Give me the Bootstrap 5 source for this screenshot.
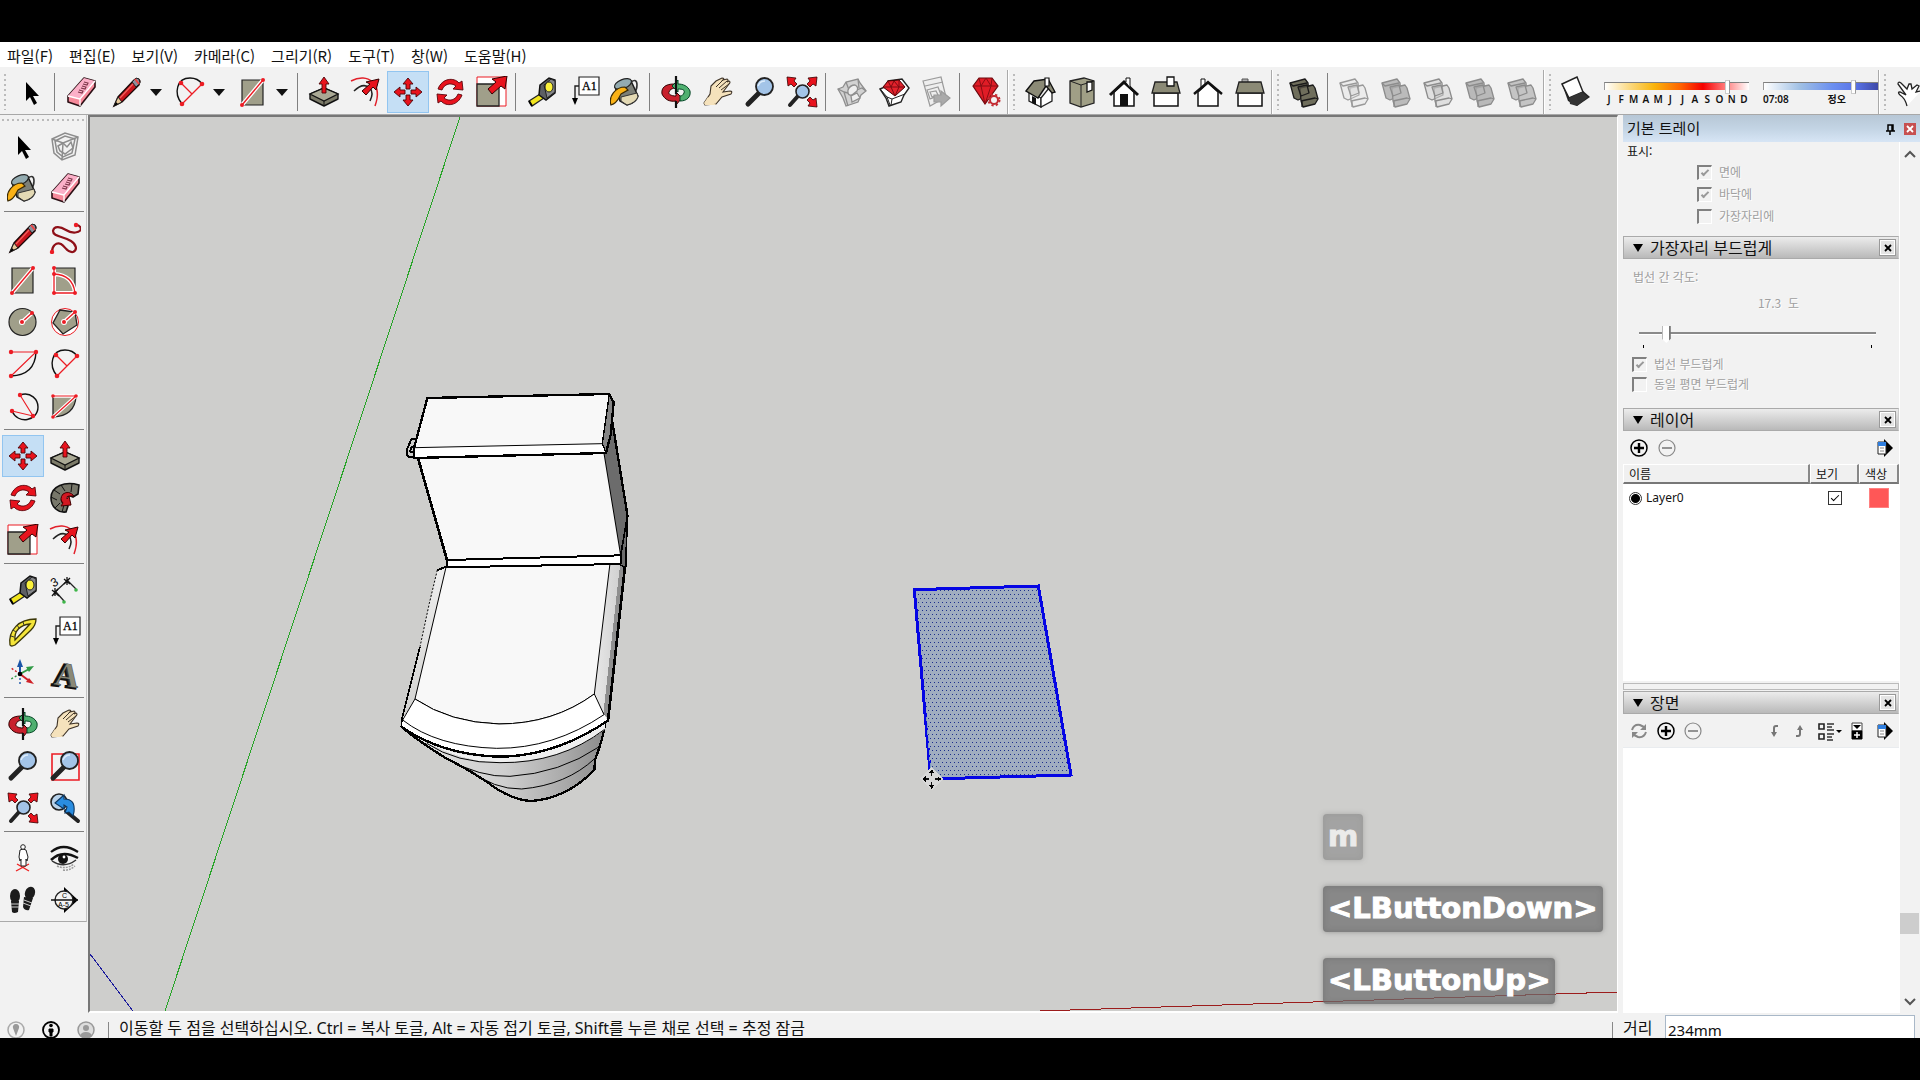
<!DOCTYPE html>
<html lang="ko">
<head>
<meta charset="utf-8">
<meta name="viewport" content="width=device-width, initial-scale=1">
<title>SketchUp</title>
<link href="https://cdn.jsdelivr.net/npm/bootstrap@5.3.0/dist/css/bootstrap.min.css" rel="stylesheet">
<style>
body{height:100vh;background:#000;padding:42px 0;color:#111;font:15px/20px "Noto Sans","Noto Sans CJK KR",sans-serif;overflow:hidden}
.kr{font-family:"Noto Sans CJK KR",sans-serif}
.app{background:#f2f2f2;min-height:0;overflow:hidden}
.menu-strip{background:#fff;height:26px;gap:16px;padding:2px 0 0 7px;border-bottom:1px solid #f2f2f2;font-family:"Noto Sans CJK KR",sans-serif}
.menu-strip a{color:#111;text-decoration:none}
.tool-strip{height:47px;padding-top:2px;border-bottom:1px solid #a8a8a8;overflow:hidden}
.tool{width:42px;height:42px;padding:4px;border:1px solid transparent;background:none;display:flex;align-items:center;justify-content:center;flex:none}
.tool.on{background:#c5dff5;border-color:#92c5f0}
.tool svg{width:32px;height:32px;flex:none;overflow:visible}
.drop{width:21px;height:42px;padding:0 8px 0 2px;border:0;background:none;display:flex;align-items:center}
.caret{width:0;height:0;border:6px solid transparent;border-top:7px solid #111;border-bottom:0}
.vsep{width:8px;height:38px;flex:none}
.vsep::before{content:"";display:block;margin-left:2px;width:1px;height:100%;background:#808080}
.grip{width:10px;flex:none;align-self:stretch;margin:4px 0}
.grip::before{content:"";display:block;margin-left:4px;width:2px;height:100%;background:repeating-linear-gradient(#bbb 0 2px,transparent 2px 5px)}
.bandend{width:2px;flex:none;align-self:stretch;border-left:1px solid #aaa;border-right:1px solid #fff}
.slide-box{font-size:10px;line-height:12px;font-weight:600;color:#111;flex:none}
.slide-box input{display:block;width:100%;height:14px;margin:0;appearance:none;background:none}
.slide-box input::-webkit-slider-runnable-track{height:8px;border-top:1px solid #808080;border-left:1px solid #999;background:var(--ramp)}
.slide-box input::-webkit-slider-thumb{appearance:none;width:5px;height:14px;margin-top:-3px;background:#fff;border:1px solid #ccc;border-right-color:#999}
.months{--ramp:linear-gradient(90deg,#fff,#fbd77a 18%,#f9b50c 34%,#f60 52%,#f50000 68%,#ff7070 82%,#fff);width:145px;margin-left:7px}
.months span{width:10px;text-align:center}
.hours{--ramp:linear-gradient(90deg,#fff,#9fbfe4 32%,#6b8ff0 60%,#5a74e8 80%,#3e49a8);width:115px;margin-left:14px}
.palette{width:87px;flex:none;margin-right:1px;padding:0 0 0 2px;border-right:1px solid #c4c4c4;border-bottom:1px solid #aaa}
.hgrip{height:10px;padding-top:4px}
.hgrip::before{content:"";display:block;height:2px;background:repeating-linear-gradient(90deg,#bbb 0 2px,transparent 2px 5px)}
.hsep{height:8px;padding:2px 2px 0}
.hsep::before{content:"";display:block;height:1px;background:#808080}
.canvas{background:#cececc;border:2px solid #fff;border-top-color:#777;border-left-color:#777;border-right-width:1px;min-width:0;position:relative;overflow:hidden}
.canvas>svg{display:block;width:100%;height:100%}
.keys{position:absolute;left:1233px;bottom:7px;display:flex;flex-direction:column;align-items:flex-start;gap:26px}
.keycap{height:46px;padding:0 5px;border-radius:4px;background:rgba(110,110,110,.72);box-shadow:0 0 5px rgba(90,90,90,.5),inset 0 0 6px rgba(90,90,90,.4);color:#fff;font:bold 29px/44px "DejaVu Sans",sans-serif;-webkit-text-stroke:1px #fff}
.keycap.old{opacity:.6}
.tray{width:297px;flex:none;margin-left:5px}
.tray-title{height:27px;padding:0 4px;background:linear-gradient(#b7c7d6,#c3d4e4 50%,#d7e5f5)}
.closer{width:12px;height:12px;background:#c75050;border:0;padding:0;display:flex;align-items:center;justify-content:center}
.tray-body{min-height:0}
.stack{width:277px;flex:none;border-right:1px solid #fff}
.scroller{width:20px;padding:8px 0 7px}
.thumb{height:21px;margin-bottom:64px;margin-right:1px;background:#cdcdcd}
.sect{height:23px;border:1px solid #aaa;border-right-color:#ccc;background:linear-gradient(#ececec,#b9b9b9);padding:0 2px 0 9px;font:16px/18px "Noto Sans CJK KR",sans-serif;flex:none}
.sect .tri{border:5px solid transparent;border-top:8px solid #000;border-bottom:0;margin-right:7px}
.sect-name,.tray-name{padding-bottom:2px}
.xbtn{width:17px;height:17px;border:1px solid #999;outline:1px solid #fff;outline-offset:-2px;background:#e4e4e4;padding:0;display:flex;align-items:center;justify-content:center}
.tiny{font:12px/18px "Noto Sans CJK KR",sans-serif}
.dim{color:#a0a0a0;text-shadow:1px 1px #fff}
.shadow-set{padding-bottom:9px}
.shadow-head{height:19px;padding-left:4px}
.shadow-list{padding-left:74px}
.soften{height:149px;padding-top:9px}
.soften-name{padding-left:10px}
.tick-row{height:22px;gap:7px}
.tick-row.tight{height:20px}
.tick{appearance:none;width:15px;height:15px;margin:0;border:1px solid #fff;border-top:2px solid #808080;border-left:2px solid #808080;background:#f2f2f2;display:flex;align-items:center;justify-content:center;flex:none}
.tick:checked::before{content:"";width:8px;height:4px;border:solid #999;border-width:0 0 2px 2px;transform:translateY(-1px) rotate(-45deg)}
.tick.live{width:14px;height:14px;border:1px solid #333;background:#fff}
.tick.live:checked::before{border-color:#000;border-width:0 0 1px 1px}
.dot{appearance:none;width:13px;height:13px;margin:0;border:1px solid #333;border-radius:50%;background:radial-gradient(#000 0 4px,#fff 5px);flex:none}
.angle{appearance:none;display:block;width:237px;height:17px;margin:14px 0 0 16px;background:linear-gradient(#8a8a8a 0 2px,#fff 2px 3px) 0 6px/100% 3px no-repeat}
.angle::-webkit-slider-thumb{appearance:none;width:9px;height:17px;border:0;background:linear-gradient(90deg,#bbb 0 1px,#fff 1px 7px,#777 7px);clip-path:polygon(0 0,100% 0,100% 75%,50% 100%,0 75%)}
.ends{height:3px;margin:2px 27px 0 20px;border:solid #000;border-width:0 1px}
.soften-list{padding:6px 0 0 9px}
.tray-tools{padding:0 5px 0 7px;flex:none}
.mini{border:0;background:none;padding:0;width:18px;height:18px;display:flex;align-items:center;justify-content:center}
.mini svg{width:18px;height:18px;flex:none;overflow:visible}
.layers{width:276px;table-layout:fixed;border-collapse:separate;border-spacing:0}
.layers th{height:20px;padding:0 0 0 5px;font-weight:400;background:#f0f0f0;border:1px solid #fff;border-right:2px solid #888;border-bottom:2px solid #777;line-height:17px}
.layers td{height:28px;padding:0 0 0 6px;vertical-align:middle}
.swatch{display:block;width:20px;height:20px;background:#ff5757;border:1px solid #ff8080}
.lister{height:217px;background:#fff;flex:none}
.split{height:7px;margin:2px 0 1px;border:1px solid #bbb;flex:none}
.status{height:25px;padding:0 5px 0 7px;flex:none}
.status svg{width:18px;height:18px}
.hint{font:16px/20px "Noto Sans","Noto Sans CJK KR",sans-serif;padding-top:4px}
.bar{width:1px;height:16px;background:#888}
.measure{width:250px;height:28px;border:1px solid #a9b8c8;border-bottom:0;border-radius:0;padding:1px 2px 0;font:15px/20px "Noto Sans",sans-serif;color:#111;background:#fff;align-self:flex-start;margin-top:2px;outline:0}
</style>
<script src="https://cdn.jsdelivr.net/npm/bootstrap@5.3.0/dist/js/bootstrap.bundle.min.js"></script>
</head>
<body class="d-flex flex-column">

<svg width="0" height="0" class="position-absolute" aria-hidden="true">
<defs>
<linearGradient id="bowl"><stop offset="0" stop-color="#e4e4e4"/><stop offset=".5" stop-color="#cfcfcf"/><stop offset=".8" stop-color="#aaa"/><stop offset="1" stop-color="#8a8a8a"/></linearGradient>
<linearGradient id="sideL" x2="0" y2="1"><stop offset="0" stop-color="#eee"/><stop offset="1" stop-color="#d2d2d0"/></linearGradient>
<linearGradient id="sideR"><stop offset="0" stop-color="#e8e8e8"/><stop offset="1" stop-color="#d0d0d0"/></linearGradient>
<pattern id="dots" width="12" height="24" patternUnits="userSpaceOnUse"><rect width="3" height="3" fill="#1c2f8c"/><rect x="6" y="12" width="3" height="3" fill="#1c2f8c"/></pattern>
<symbol id="i-arrow" viewBox="0 0 32 32"><path d="M11 6v19l4-4 4 8 3-2-4-7h6z" fill="#000"/></symbol>
<symbol id="i-eraser" viewBox="0 0 32 32"><path d="M19 2l11 3v6L15 30 3 26v-6z" fill="#f68a9b" stroke="#2b1015" stroke-width="1.6" stroke-linejoin="round"/><path d="M19 2l11 3-15 18-12-3z" fill="#fbb0c8"/><path d="M3 20l12 3v7M15 23L30 5" fill="none" stroke="#fff" stroke-width="1.3"/><path d="M19 6l4 1-1 2-4-1M17 10l4 1-1 2-4-1M14 14l4 1-1 2-4-1" fill="none" stroke="#7c3548" stroke-width="1.1"/></symbol>
<symbol id="i-pencil" viewBox="0 0 32 32"><path d="M3 30l4-9L23 4q4-3 6 1l-1 4-17 17z" fill="#c8141c" stroke="#1c0808" stroke-width="1.4"/><path d="M3 30l4-9 4 5z" fill="#e8c99a" stroke="#222"/><path d="M3 30l2-4 2 2z" fill="#000"/><path d="M21 6l4 5 4-4-1-4-3-1z" fill="#8a8f9c" stroke="#222"/><path d="M24 3l4 5" stroke="#e44" stroke-width="2"/><path d="M9 22L22 8" stroke="#f0605c" stroke-width="1.2"/></symbol>
<symbol id="i-free" viewBox="0 0 32 32"><path d="M3 30c0-6 4-10 9-8 5 3 6 9 12 8 5-2 3-8-2-11C14 14 4 15 4 9c1-6 8-4 13-1 6 4 14 3 15-1q-1-4-5-4" fill="none" stroke="#8f1018" stroke-width="2.2"/><g fill="#ec1c24"><circle cx="3" cy="30" r="2.2"/><circle cx="27" cy="3" r="2.2"/></g></symbol>
<symbol id="i-rect" viewBox="0 0 32 32"><path d="M5 4h21v25H5z" fill="#a09f8a" stroke="#222" stroke-width="1.2"/><path d="M5 29L26 4" stroke="#fff" stroke-width="4"/><path d="M5 29L26 4" stroke="#ec1c24" stroke-width="1.4"/><g fill="#ec1c24"><circle cx="5" cy="29" r="2"/><circle cx="26" cy="4" r="2"/></g></symbol>
<symbol id="i-rrect" viewBox="0 0 32 32"><path d="M5 4h21v25H5z" fill="#a09f8a" stroke="#222" stroke-width="1.2"/><path d="M5 4v25h21Q24 11 5 10" fill="none" stroke="#fff" stroke-width="4"/><path d="M5 4v25h21Q24 11 5 10" fill="none" stroke="#ec1c24" stroke-width="1.3"/><g fill="#ec1c24"><circle cx="5" cy="4" r="2"/><circle cx="5" cy="10" r="2"/><circle cx="5" cy="29" r="2"/><circle cx="26" cy="29" r="2"/></g></symbol>
<symbol id="i-circle" viewBox="0 0 32 32"><circle cx="15.500" cy="16" r="13.500" fill="#a09f8a" stroke="#222" stroke-width="1.2"/><path d="M15 16L25 7" stroke="#fff" stroke-width="4"/><path d="M15 16L25 7" stroke="#ec1c24" stroke-width="1.4"/><circle cx="15" cy="16" r="3" fill="#fff"/><g fill="#ec1c24"><circle cx="15" cy="16" r="2"/><circle cx="25" cy="7" r="2"/></g></symbol>
<symbol id="i-poly" viewBox="0 0 32 32"><circle cx="16" cy="16" r="13.500" fill="#fff" stroke="#ec1c24"/><path d="M11 4l15 2 2 13-14 9L4 17z" fill="#a09f8a" stroke="#222" stroke-width="1.3"/><path d="M15 16L26 6" stroke="#fff" stroke-width="4"/><path d="M15 16L26 6" stroke="#ec1c24" stroke-width="1.4"/><circle cx="15" cy="16" r="3" fill="#fff"/><g fill="#ec1c24"><circle cx="15" cy="16" r="2"/><circle cx="26" cy="6" r="2"/></g></symbol>
<symbol id="i-arc1" viewBox="0 0 32 32"><path d="M29 4Q28 27 4 28" fill="none" stroke="#111" stroke-width="1.4"/><path d="M4 4h25L4 28" fill="none" stroke="#ec1c24" stroke-width="1.1"/><g fill="#ec1c24"><circle cx="4" cy="4" r="2.200"/><circle cx="29" cy="4" r="2.200"/><circle cx="4" cy="28" r="2.200"/></g></symbol>
<symbol id="i-arc2" viewBox="0 0 32 32"><path d="M8 28C-1 17 3 2 16 2q8 0 12 6" fill="none" stroke="#111" stroke-width="1.4"/><path d="M8 28L28 8M7 7l11 11" fill="none" stroke="#ec1c24" stroke-width="1.3"/><g fill="#ec1c24"><circle cx="7" cy="7" r="2.300"/><circle cx="28" cy="8" r="2.300"/><circle cx="8" cy="28" r="2.300"/></g></symbol>
<symbol id="i-arc3" viewBox="0 0 32 32"><path d="M13 5C24 1 31 10 31 17c0 14-20 18-26 4" fill="none" stroke="#111" stroke-width="1.4"/><path d="M13 5l13 21-21-5" fill="none" stroke="#ec1c24" stroke-width="1.1"/><g fill="#ec1c24"><circle cx="13" cy="5" r="2.200"/><circle cx="5" cy="21" r="2.200"/><circle cx="26" cy="26" r="2.200"/></g></symbol>
<symbol id="i-pie" viewBox="0 0 32 32"><path d="M4 6h23Q26 26 4 27z" fill="#a09f8a" stroke="#222" stroke-width="1.3"/><path d="M4 6h23L4 27" fill="none" stroke="#fff" stroke-width="3.500"/><path d="M4 6h23L4 27" fill="none" stroke="#ec1c24" stroke-width="1.200"/><g fill="#ec1c24"><circle cx="4" cy="6" r="1.800"/><circle cx="27" cy="6" r="1.800"/><circle cx="4" cy="27" r="1.800"/></g></symbol>
<symbol id="i-move" viewBox="0 0 32 32"><path id="mv" d="M16 2l5 6h-3v5h-4V8h-3z" fill="#e8131d" stroke="#4a0508" stroke-width=".9"/><use href="#mv" transform="rotate(90 16 16)"/><use href="#mv" transform="rotate(180 16 16)"/><use href="#mv" transform="rotate(270 16 16)"/></symbol>
<symbol id="i-push" viewBox="0 0 32 32"><path d="M2 18l14-6 14 6v5l-14 7-14-7z" fill="#7c7b69" stroke="#111" stroke-width="1.4" stroke-linejoin="round"/><path d="M2 18l14-6 14 6-14 7z" fill="#aaa995" stroke="#111" stroke-width="1.2"/><path d="M16 25v5" stroke="#111"/><path d="M16 1l5 7h-3v9h-4V8h-3z" fill="#e8131d" stroke="#4a0508" stroke-width=".9"/></symbol>
<symbol id="i-rotate" viewBox="0 0 32 32"><path id="rt" d="M4 13C8 2 20 1 25 7l3-2 1 9-10-1 3-3C17 6 10 8 8 14z" fill="#e8131d" stroke="#5a060b" stroke-width=".9"/><use href="#rt" transform="rotate(180 16 16)"/></symbol>
<symbol id="i-follow" viewBox="0 0 32 32"><path d="M2 16C2 4 16-1 30 3l-1 9-5 3C16 11 11 15 13 20l6 4-2 6C9 31 2 25 2 16z" fill="#77776a" stroke="#111" stroke-width="1.600"/><path d="M2 15l6 3M5 8l6 4M12 3l4 6M6 26l5-5M13 30l2-7M23 2l-1 8" stroke="#111"/><path d="M25 14q-5-6-11-2-4 5 0 9l-2 3 10-1-2-9-2 3q-1-3 2-3z" fill="#d41822" stroke="#400"/></symbol>
<symbol id="i-scale" viewBox="0 0 32 32"><path d="M1 1h29v29H1z" fill="#fff" stroke="#ec1c24"/><path d="M1 8h22v22H1z" fill="#a09f8a" stroke="#222" stroke-width="1.3"/><path d="M31 0l-2 13-4-3-9 8-4-5 8-7-4-3z" fill="#e8131d" stroke="#300" stroke-width="1"/></symbol>
<symbol id="i-offset" viewBox="0 0 32 32"><path d="M1 5C18-4 33 8 25 30" fill="none" stroke="#e2202a" stroke-width="1.500"/><path d="M4 15q9-9 16-3 4 5 0 13" fill="none" stroke="#222" stroke-width="1.500"/><path d="M29 3l-3 11-3-3-7 8-4-4 8-7-4-2z" fill="#e8131d" stroke="#300" stroke-width="1"/></symbol>
<symbol id="i-tape" viewBox="0 0 32 32"><path d="M3 25l11-7 4 4-12 8z" fill="#f2e51d" stroke="#222" stroke-width="1.3"/><path d="M14 9L23 2l6 2v13l-9 7-7-5z" fill="#5d5f63" stroke="#111" stroke-width="1.500"/><path d="M18 9l7-6 4 2v11l-8 6z" fill="#85878a" stroke="#222"/><ellipse cx="23" cy="11" rx="4" ry="5" fill="#fbf13a" stroke="#222"/><path d="M3 25l3 5" stroke="#000" stroke-width="2"/></symbol>
<symbol id="i-label" viewBox="0 0 32 32"><path d="M11 1h20v18H11z" fill="#fff" stroke="#222" stroke-width="1.200"/><path d="M11 10H7v14" fill="none" stroke="#222" stroke-width="1.400"/><path d="M4 22h6l-3 7z"/><text x="14" y="14" font-family="Liberation Serif,serif" font-size="12" stroke="#000" stroke-width=".3">A1</text></symbol>
<symbol id="i-paint" viewBox="0 0 32 32"><path d="M21 6q6-4 6 3 0 5-3 8" fill="none" stroke="#333" stroke-width="1.600"/><path d="M5 11L21 5l7 15q-2 7-11 9l-7-4z" fill="#7d8078" stroke="#1c1c1c" stroke-width="1.500"/><path d="M11 21l16-4 1 4q-3 6-11 8l-6-4z" fill="#e3d9b4" stroke="#333"/><ellipse cx="13" cy="8" rx="9" ry="4.500" transform="rotate(-22 13 8)" fill="#93abb0" stroke="#222" stroke-width="1.200"/><path d="M15 11C6 11-2 20 1 29c7-2 8-8 10-11l7-4z" fill="#fbb216" stroke="#3a2a05" stroke-width="1.200"/></symbol>
<symbol id="i-orbit" viewBox="0 0 32 32"><path d="M14 8C5 8 1 12 2 18c3 6 8 8 14 7v4l6-7-6-6v4c-5 0-8-2-7-4 1-3 3-3 5-4z" fill="#c8202c" stroke="#300" stroke-width="1"/><path d="M20 25c7 0 11-4 10-10-2-5-7-7-12-7V4l-6 6 6 6v-3c5 0 7 1 6 4-1 2-2 3-4 3z" fill="#4fb070" stroke="#042" stroke-width="1"/><path d="M16 0v18M16 25v7" stroke="#111" stroke-width="2.200"/></symbol>
<symbol id="i-hand" viewBox="0 0 32 32"><path d="M3 29l-1-2 6-9 1-8 5-5 6-3q3 0 1 2l4-1q2 1 0 3l2-1q2 1 0 3l-6 8 7-1q3 0 1 3l-9 3-6 7z" fill="#f5e2bc" stroke="#3d3226" stroke-width="1.100"/><path d="M14 11l7-7M17 12l8-7M19 14l8-6" fill="none" stroke="#3d3226"/><path d="M3 29l-1-2 4-6 8 8z" fill="#f5e2bc"/></symbol>
<symbol id="i-zoom" viewBox="0 0 32 32"><path d="M4 28L15 17" stroke="#222" stroke-width="5" stroke-linecap="round"/><circle cx="20.500" cy="10.500" r="8.500" fill="#a3c4e8" stroke="#222" stroke-width="1.800"/><path d="M14 10q2-5 7-5" stroke="#dcecfb" stroke-width="1.500" fill="none"/></symbol>
<symbol id="i-zwin" viewBox="0 0 32 32"><path d="M3 4h27v26H3z" fill="none" stroke="#ec1c24" stroke-width="1.600"/><use href="#i-zoom" width="32" height="32"/></symbol>
<symbol id="i-zext" viewBox="0 0 32 32"><path d="M4 29l8-9" stroke="#222" stroke-width="4" stroke-linecap="round"/><circle cx="16.500" cy="15.500" r="6.500" fill="#a3c4e8" stroke="#222" stroke-width="1.600"/><path id="ze" d="M31 1l-1 9-3-2-3 3-3-3 3-3-2-3z" fill="#e8131d" stroke="#300" stroke-width=".8"/><use href="#ze" transform="rotate(90 16 16)"/><use href="#ze" transform="rotate(270 16 16)"/></symbol>
<symbol id="i-zprev" viewBox="0 0 32 32"><circle cx="10" cy="10" r="8" fill="#b8d2ea" stroke="#222" stroke-width="1.600"/><path d="M17 19l12 10" stroke="#222" stroke-width="4" stroke-linecap="round"/><path d="M6 11l9-8v4c8 0 11 4 10 13l-1 4-4-4-4 1 2-6-3-2v4z" fill="#2a8de0" stroke="#0b3660" stroke-width="1.100"/></symbol>
<symbol id="i-comp" viewBox="0 0 32 32"><g fill="none" stroke="#8d8d8d" stroke-width="1.500"><path d="M3 9L16 3l13 4-3 18-13 5-8-7zM3 9l11 4 15-6M14 13l-1 17M6 11l10-5 10 3-3 14-9 4-6-5z"/><path d="M9 16l5-3 4 4 4-5 2 6-8 6-5-3z"/></g></symbol>
<symbol id="i-dim" viewBox="0 0 32 32"><path d="M6 18L18 7M18 6l9 9M7 18l8 9" stroke="#222" stroke-width="1.300"/><path d="M15 5l6 5M15 10l6-6M18 3v8M3 16l7 6M3 22l6-7M6 14v8" stroke="#111" stroke-width="1.300"/><text x="2" y="12" font-family="Liberation Sans" font-size="12" transform="rotate(-30 6 8)">3</text><g fill="#3eb649"><circle cx="27" cy="16" r="1.800"/><circle cx="15" cy="28" r="1.800"/></g></symbol>
<symbol id="i-prot" viewBox="0 0 32 32"><path d="M3 29C1 14 12 3 29 3q0 6-5 11T8 29q-4 2-5 0zM8 24C7 15 13 9 23 8L8 24z" fill="#f4e53a" fill-rule="evenodd" stroke="#3b3708" stroke-width="1.300"/><path d="M6 14l3 2M10 9l2 3M16 6l1 3M4 20l3 1" stroke="#333"/></symbol>
<symbol id="i-axes" viewBox="0 0 32 32"><path d="M13 16V5" stroke="#1b55a8" stroke-width="2"/><path d="M13 1l3 8h-6z" fill="#1b55a8"/><path d="M13 16l9-5" stroke="#2f9a45" stroke-width="2"/><path d="M27 8l-8 1 3 5z" fill="#2f9a45"/><path d="M13 16l8 6" stroke="#cf2027" stroke-width="2"/><path d="M27 26l-8-2 3-4z" fill="#cf2027"/><g stroke-width="1.400" stroke-dasharray="2"><path d="M13 16v11" stroke="#1b55a8"/><path d="M13 16l-9 5" stroke="#2f9a45"/><path d="M13 16l-9-6" stroke="#cf2027"/></g><circle cx="13" cy="16" r="2.300"/></symbol>
<symbol id="i-text3d" viewBox="0 0 32 32"><g font-family="Liberation Serif,serif" font-weight="700" font-size="34" transform="rotate(8 16 16)"><text x="4" y="29" fill="#333" stroke="#111" stroke-width="2">A</text><text x="6" y="28" fill="#8a8977" stroke="#222" stroke-width=".4">A</text></g></symbol>
<symbol id="i-person" viewBox="0 0 32 32"><path d="M9 29l13-7M10 22l12 7" stroke="#e22" stroke-width="1.400"/><path d="M13 8q3-2 6 0l2 7-1 4-1-2v7h-5v-7l-1 2-1-4z" fill="#fff" stroke="#222"/><circle cx="16" cy="5" r="2.300" fill="#fff" stroke="#222"/></symbol>
<symbol id="i-eye" viewBox="0 0 32 32"><path d="M2 10Q14 0 29 10" fill="none" stroke="#111" stroke-width="2.200"/><path d="M2 18Q13 7 29 16" fill="none" stroke="#111" stroke-width="2.500"/><path d="M3 19q12 8 24-1" fill="none" stroke="#333" stroke-width="1.500"/><circle cx="14" cy="17" r="5" fill="#111"/><circle cx="15" cy="15" r="1.400" fill="#fff"/><path d="M8 24q9 4 17-2M14 28q6 1 12-4" stroke="#999" stroke-width="1.500" stroke-dasharray="2 1" fill="none"/></symbol>
<symbol id="i-feet" viewBox="0 0 32 32"><g fill="#1c1c1c"><ellipse cx="8" cy="12" rx="5" ry="7"/><path d="M4 17h8l-1 11q-4 2-6 0z"/><ellipse cx="23" cy="9" rx="5" ry="6.500" transform="rotate(20 23 9)"/><path d="M17 13l9 1-4 12q-4 1-6-3z"/></g><path d="M4 20h8M4 23h8M17 16l8 3M16 19l8 3" stroke="#ccc" stroke-width="1"/></symbol>
<symbol id="i-sect" viewBox="0 0 32 32"><path d="M15 3l14 13-14 13z"/><circle cx="15" cy="16" r="9" fill="#f4f4f4" stroke="#222" stroke-width="1.400"/><path d="M2 16h27" stroke="#111" stroke-width="1.500"/><g font-family="Liberation Sans" font-size="7"><text x="13" y="14">C</text><text x="9" y="23">A-5</text></g></symbol>
<symbol id="i-wh" viewBox="0 0 32 32"><g fill="#d2d2d2" stroke="#8e8e8e" stroke-width="1.300"><path d="M2 13l5-2 3-5 12-3 2 4 6 8-5 4-3 7-12 4-3-8z"/><path d="M2 13l6 3 4 14M8 16l4 1 14-5 4 3M10 6l3 8M22 3l1 9" fill="none"/><path d="M12 14q2-5 7-5 4 2 2 6l-5 4q-5 1-4-5zM15 20l6-3 3 5-8 4z" fill="#eee"/></g></symbol>
<symbol id="i-whr" viewBox="0 0 32 32"><path d="M2 13l5-2 3-6 14-2 7 9-5 7-3 7-12 4-3-8z" fill="#fff" stroke="#222" stroke-width="1.400"/><path d="M3 14l6 7 3 8M9 21l5 2 13-5M14 23l-1 6" stroke="#222" fill="none"/><path d="M5 11l5-6 11-1 6 7-10 9z" fill="#e3222c" stroke="#400"/><path d="M5 11h22M10 5l3 6 4 9 4-9V4M13 11l3-6 5 6" stroke="#7a0a10" fill="none"/></symbol>
<symbol id="i-share" viewBox="0 0 32 32"><g fill="#eee" stroke="#9b9b9b" stroke-width="1.200"><path d="M3 5l18-4 5 20-16 9z"/><path d="M5 10l18-4M7 14l11-3 3 8-11 4zM10 16l6-1 2 4-6 2z"/><path d="M14 19h7v-4l9 7-9 8v-4h-7z" fill="#aaa"/></g></symbol>
<symbol id="i-gem" viewBox="0 0 32 32"><path d="M3 10l6-8h13l6 8-13 18z" fill="#e01c26" stroke="#6b080d" stroke-width="1.200"/><path d="M3 10h25M9 2l2 8 4 18 6-18 1-8M11 10l5-8 5 8" fill="none" stroke="#8b0d13"/><circle cx="24" cy="24" r="4" fill="#f2f2f2" stroke="#c32b32" stroke-width="2"/><circle cx="24" cy="24" r="5.500" fill="none" stroke="#c32b32" stroke-width="2" stroke-dasharray="2.200"/></symbol>
<symbol id="i-iso" viewBox="0 0 32 32"><path d="M5 15l12 7v9L5 25z" fill="#fff" stroke="#222" stroke-width="1.300"/><path d="M17 22l8-10 3 4v9l-11 6z" fill="#fff" stroke="#222" stroke-width="1.300"/><path d="M2 15L10 5l14-2 7 13-3 1-6-7-8 12z" fill="#8b8a76" stroke="#111" stroke-width="1.400"/><path d="M21 2h4v8h-4z" fill="#fff" stroke="#111" stroke-width="1.200"/><path d="M8 20l4 2v7l-4-2z" fill="#111"/></symbol>
<symbol id="i-top" viewBox="0 0 32 32"><path d="M4 5l14-3 10 3v22l-13 4-11-4z" fill="#a09f86" stroke="#222" stroke-width="1.300"/><path d="M4 5l11 4 13-4M15 9v22" stroke="#222" fill="none"/><path d="M21 6h5v8l-5 2z" fill="#fff" stroke="#111" stroke-width="1.300"/></symbol>
<symbol id="i-front" viewBox="0 0 32 32"><path d="M6 16L16 7l10 9v14H6z" fill="#fff" stroke="#111" stroke-width="1.500"/><path d="M2 19L16 6l14 13" fill="none" stroke="#111" stroke-width="3"/><path d="M18 6V2h4v9" fill="#fff" stroke="#111"/><path d="M12 18h8v12h-8z" fill="#111"/></symbol>
<symbol id="i-right" viewBox="0 0 32 32"><path d="M4 17h24v13H4z" fill="#fff" stroke="#111" stroke-width="1.500"/><path d="M5 6h22l3 11H2z" fill="#8b8a76" stroke="#222" stroke-width="1.300"/><path d="M17 1h7v9h-7z" fill="#fff" stroke="#111" stroke-width="1.300"/></symbol>
<symbol id="i-back" viewBox="0 0 32 32"><path d="M9 11V3h4v6" fill="#fff" stroke="#111"/><path d="M6 16L16 7l10 9v14H6z" fill="#fff" stroke="#111" stroke-width="1.500"/><path d="M2 18L16 6l14 12" fill="none" stroke="#111" stroke-width="2.400"/></symbol>
<symbol id="i-left" viewBox="0 0 32 32"><path d="M8 3h6v4H8z" fill="#aaa" stroke="#555"/><path d="M4 17h24v13H4z" fill="#fff" stroke="#111" stroke-width="1.500"/><path d="M5 6h22l3 11H2z" fill="#8b8a76" stroke="#222" stroke-width="1.300"/></symbol>
<symbol id="i-solid" viewBox="0 0 32 32"><g stroke-width="1.300" stroke-linejoin="round"><path d="M2 7l15-4 3 4 1 12-11 5-4-2z"/><path d="M12 12l13-3 2 3 3 11-3 5-12 3-2-6z"/><path d="M2 7l3 3 14-3M13 25l14-3 3 1M14 31v-6" fill="none"/><path d="M10 11l9-2 2 8-8 3z" fill-opacity=".6"/></g></symbol>
<symbol id="i-shadow" viewBox="0 0 32 32"><path d="M2 8l6 17 9 5 13-9-8-7z" fill="#222"/><path d="M2 8L17 1l6 15-14 6z" fill="#fff" stroke="#222" stroke-width="1.500"/><path d="M9 22l13-6 6 5-11 9-7-2z" fill="#333"/></symbol>
<symbol id="i-hand2" viewBox="0 0 32 32"><path d="M12 30q-2-8-7-11-3-3 0-3l6 3-8-11q0-3 3-1l6 6 2-5h2l1 5 5-4 2 1-3 6 5-1" fill="#fff" stroke="#222" stroke-width="1.300"/></symbol>
<symbol id="m-plus" viewBox="0 0 18 18"><circle cx="9" cy="9" r="8" fill="none" stroke="#000" stroke-width="1.500"/><path d="M4 9h10M9 4v10" stroke="#000" stroke-width="2.400"/></symbol>
<symbol id="m-minus" viewBox="0 0 18 18"><circle cx="9" cy="9" r="8" fill="none" stroke="#888" stroke-width="1.200"/><path d="M4 9h10" stroke="#888" stroke-width="1.800"/></symbol>
<symbol id="m-detail" viewBox="0 0 18 18"><path d="M8 0l9 9-9 9z"/><path d="M2 3h8v12H2z" fill="#fff" stroke="#222"/><path d="M2 3h8v4H2z" fill="#2f7fe0"/><path d="M4 9h4M4 12h4" stroke="#888"/></symbol>
<symbol id="m-x" viewBox="0 0 10 10"><path d="M2 2l6 6M8 2L2 8" stroke="currentColor" stroke-width="1.800"/></symbol>
</defs>
</svg>

<div class="app d-flex flex-column flex-fill">
<nav class="menu-strip d-flex align-items-center flex-shrink-0">
<a href="#">파일(F)</a><a href="#">편집(E)</a><a href="#">보기(V)</a><a href="#">카메라(C)</a><a href="#">그리기(R)</a><a href="#">도구(T)</a><a href="#">창(W)</a><a href="#">도움말(H)</a>
</nav>

<div class="tool-strip d-flex align-items-center flex-shrink-0">
<span class="grip"></span>
<button class="tool" aria-label="선택"><svg><use href="#i-arrow"/></svg></button>
<span class="vsep"></span>
<button class="tool me-1" aria-label="지우기"><svg><use href="#i-eraser"/></svg></button>
<button class="tool" aria-label="선"><svg><use href="#i-pencil"/></svg></button><button class="drop" aria-label="선 도구"><span class="caret"></span></button>
<button class="tool" aria-label="호"><svg><use href="#i-arc2"/></svg></button><button class="drop" aria-label="호 도구"><span class="caret"></span></button>
<button class="tool" aria-label="직사각형"><svg><use href="#i-rect"/></svg></button><button class="drop" aria-label="도형 도구"><span class="caret"></span></button>
<span class="vsep"></span>
<button class="tool" aria-label="밀기/끌기"><svg><use href="#i-push"/></svg></button>
<button class="tool" aria-label="오프셋"><svg><use href="#i-offset"/></svg></button>
<button class="tool on" aria-label="이동"><svg><use href="#i-move"/></svg></button>
<button class="tool" aria-label="회전"><svg><use href="#i-rotate"/></svg></button>
<button class="tool" aria-label="배율"><svg><use href="#i-scale"/></svg></button>
<span class="vsep"></span>
<button class="tool" aria-label="줄자"><svg><use href="#i-tape"/></svg></button>
<button class="tool" aria-label="텍스트"><svg><use href="#i-label"/></svg></button>
<button class="tool" aria-label="페인트통"><svg><use href="#i-paint"/></svg></button>
<span class="vsep"></span>
<button class="tool" aria-label="궤도"><svg><use href="#i-orbit"/></svg></button>
<button class="tool" aria-label="이동 보기"><svg><use href="#i-hand"/></svg></button>
<button class="tool" aria-label="확대/축소"><svg><use href="#i-zoom"/></svg></button>
<button class="tool" aria-label="전체 보기"><svg><use href="#i-zext"/></svg></button>
<span class="vsep"></span>
<button class="tool" aria-label="모델 가져오기"><svg><use href="#i-wh"/></svg></button>
<button class="tool" aria-label="3D Warehouse"><svg><use href="#i-whr"/></svg></button>
<button class="tool" aria-label="모델 공유"><svg><use href="#i-share"/></svg></button>
<span class="vsep"></span>
<button class="tool" aria-label="확장"><svg><use href="#i-gem"/></svg></button>
<span class="bandend"></span><span class="grip"></span>
<button class="tool" aria-label="등각"><svg><use href="#i-iso"/></svg></button>
<button class="tool" aria-label="위"><svg><use href="#i-top"/></svg></button>
<button class="tool" aria-label="앞"><svg><use href="#i-front"/></svg></button>
<button class="tool" aria-label="오른쪽"><svg><use href="#i-right"/></svg></button>
<button class="tool" aria-label="뒤"><svg><use href="#i-back"/></svg></button>
<button class="tool" aria-label="왼쪽"><svg><use href="#i-left"/></svg></button>
<span class="bandend"></span><span class="grip"></span>
<button class="tool" aria-label="외부 셸"><svg fill="#6f6e5c" stroke="#1b1b1b"><use href="#i-solid"/></svg></button>
<span class="vsep"></span>
<button class="tool" aria-label="교차"><svg fill="#ddd" fill-opacity=".3" stroke="#999"><use href="#i-solid"/></svg></button>
<button class="tool" aria-label="결합"><svg fill="#bbb" stroke="#8c8c8c"><use href="#i-solid"/></svg></button>
<button class="tool" aria-label="빼기"><svg fill="#ccc" fill-opacity=".5" stroke="#8c8c8c"><use href="#i-solid"/></svg></button>
<button class="tool" aria-label="트림"><svg fill="#b9b9b9" stroke="#8c8c8c"><use href="#i-solid"/></svg></button>
<button class="tool" aria-label="분할"><svg fill="#c4c4c4" stroke="#8c8c8c"><use href="#i-solid"/></svg></button>
<span class="bandend"></span><span class="grip"></span>
<button class="tool" aria-label="그림자"><svg><use href="#i-shadow"/></svg></button>
<div class="slide-box months"><input type="range" min="0" max="100" value="86" aria-label="날짜">
<div class="d-flex justify-content-between"><span>J</span><span>F</span><span>M</span><span>A</span><span>M</span><span>J</span><span>J</span><span>A</span><span>S</span><span>O</span><span>N</span><span>D</span></div></div>
<div class="slide-box hours"><input type="range" min="0" max="100" value="80" aria-label="시간">
<div class="d-flex justify-content-between pe-4 me-2"><span>07:08</span><span>정오</span></div></div>
<span class="bandend"></span><span class="grip"></span>
<button class="tool" aria-label="상호작용"><svg><use href="#i-hand2"/></svg></button>
</div>

<div class="tray-body d-flex flex-fill">
<div class="flex-shrink-0">
<div class="palette">
<div class="hgrip"></div>
<div class="d-flex flex-wrap">
<button class="tool" aria-label="선택"><svg><use href="#i-arrow"/></svg></button><button class="tool" aria-label="구성 요소"><svg><use href="#i-comp"/></svg></button>
<button class="tool" aria-label="페인트통"><svg><use href="#i-paint"/></svg></button><button class="tool" aria-label="지우기"><svg><use href="#i-eraser"/></svg></button>
</div><div class="hsep"></div>
<div class="d-flex flex-wrap">
<button class="tool" aria-label="선"><svg><use href="#i-pencil"/></svg></button><button class="tool" aria-label="자유 곡선"><svg><use href="#i-free"/></svg></button>
<button class="tool" aria-label="직사각형"><svg><use href="#i-rect"/></svg></button><button class="tool" aria-label="회전 직사각형"><svg><use href="#i-rrect"/></svg></button>
<button class="tool" aria-label="원"><svg><use href="#i-circle"/></svg></button><button class="tool" aria-label="다각형"><svg><use href="#i-poly"/></svg></button>
<button class="tool" aria-label="호"><svg><use href="#i-arc1"/></svg></button><button class="tool" aria-label="2점 호"><svg><use href="#i-arc2"/></svg></button>
<button class="tool" aria-label="3점 호"><svg><use href="#i-arc3"/></svg></button><button class="tool" aria-label="파이"><svg><use href="#i-pie"/></svg></button>
</div><div class="hsep"></div>
<div class="d-flex flex-wrap">
<button class="tool on" aria-label="이동"><svg><use href="#i-move"/></svg></button><button class="tool" aria-label="밀기/끌기"><svg><use href="#i-push"/></svg></button>
<button class="tool" aria-label="회전"><svg><use href="#i-rotate"/></svg></button><button class="tool" aria-label="따라가기"><svg><use href="#i-follow"/></svg></button>
<button class="tool" aria-label="배율"><svg><use href="#i-scale"/></svg></button><button class="tool" aria-label="오프셋"><svg><use href="#i-offset"/></svg></button>
</div><div class="hsep"></div>
<div class="d-flex flex-wrap">
<button class="tool" aria-label="줄자"><svg><use href="#i-tape"/></svg></button><button class="tool" aria-label="치수"><svg><use href="#i-dim"/></svg></button>
<button class="tool" aria-label="각도기"><svg><use href="#i-prot"/></svg></button><button class="tool" aria-label="텍스트"><svg><use href="#i-label"/></svg></button>
<button class="tool" aria-label="축"><svg><use href="#i-axes"/></svg></button><button class="tool" aria-label="3D 텍스트"><svg><use href="#i-text3d"/></svg></button>
</div><div class="hsep"></div>
<div class="d-flex flex-wrap">
<button class="tool" aria-label="궤도"><svg><use href="#i-orbit"/></svg></button><button class="tool" aria-label="이동 보기"><svg><use href="#i-hand"/></svg></button>
<button class="tool" aria-label="확대/축소"><svg><use href="#i-zoom"/></svg></button><button class="tool" aria-label="창 확대"><svg><use href="#i-zwin"/></svg></button>
<button class="tool" aria-label="전체 보기"><svg><use href="#i-zext"/></svg></button><button class="tool" aria-label="이전"><svg><use href="#i-zprev"/></svg></button>
</div><div class="hsep"></div>
<div class="d-flex flex-wrap">
<button class="tool" aria-label="카메라 배치"><svg><use href="#i-person"/></svg></button><button class="tool" aria-label="둘러보기"><svg><use href="#i-eye"/></svg></button>
<button class="tool" aria-label="걷기"><svg><use href="#i-feet"/></svg></button><button class="tool" aria-label="단면"><svg><use href="#i-sect"/></svg></button>
</div>
</div>
</div>

<main class="canvas flex-fill">
<svg viewBox="90 117 1527 894" preserveAspectRatio="xMinYMin slice" shape-rendering="crispEdges">
<path d="M460 117L165 1011" stroke="#28a428" fill="none"/>
<path d="M90 954L133 1011" stroke="#1c1c9c" fill="none"/>
<path d="M1040 1011L1617 992" stroke="#9c1c1c" fill="none"/>
<g transform="translate(380 370) scale(.33333)" stroke="#000" stroke-linejoin="round">
<path d="M64 1070Q110 1110 200 1166 Q260 1195 320 1235 Q390 1290 455 1293Q560 1285 643 1200L645 1170Q668 1110 676 1060z" fill="url(#bowl)" stroke-width="7"/>
<path d="M130 1110Q230 1165 340 1160 Q520 1160 676 1058L674 1080Q540 1180 360 1178 Q240 1175 130 1110z" fill="#f0f0f0" stroke="none"/>
<path d="M140 1120Q230 1180 360 1178 Q540 1180 674 1078M200 1166Q300 1222 390 1219 Q540 1210 658 1130M270 1200Q340 1258 425 1257 Q560 1245 645 1165" fill="none" stroke-width="3"/>
<path d="M172 600L200 590 105 985 66 1048z" fill="url(#sideL)" stroke="none"/>
<path d="M690 580L722 586 680 1050 643 970z" fill="url(#sideR)" stroke="none"/>
<path d="M720 586L735 596 686 1050 670 1030z" fill="#8f8f8f" stroke="none"/>
<path d="M198 592L690 580 643 972Q520 1062 357 1062 Q210 1058 105 987z" fill="#f8f8f8" stroke-width="3"/>
<path d="M105 987Q210 1058 357 1062 Q520 1062 643 972L682 1052Q520 1162 350 1160 Q180 1152 64 1070L66 1048z" fill="#fff" stroke="none"/>
<path d="M105 987Q210 1058 357 1062 Q520 1062 643 972L672 1034Q520 1136 350 1135 Q170 1130 68 1050z" fill="none" stroke-width="3"/>
<path d="M64 1070Q180 1152 350 1160 Q520 1162 684 1052" fill="none" stroke-width="7"/>
<path d="M172 600L148 700 120 830" fill="none" stroke-width="3" stroke-dasharray="6 5"/>
<path d="M120 830L66 1045 64 1070" fill="none" stroke-width="5"/>
<path d="M735 590L684 1052" fill="none" stroke-width="8"/>
<path d="M172 600L200 590" stroke-width="6"/>
<path d="M114 264L672 250 722 556 203 570z" fill="#f8f8f8" stroke="none"/>
<path d="M672 250L697 155 742 440 722 556z" fill="#6c6c6c" stroke-width="3"/>
<path d="M722 556L742 440 737 594 722 585z" fill="#6c6c6c" stroke-width="5"/>
<path d="M203 570L722 556V582L200 592z" fill="#fff" stroke-width="6"/>
<path d="M114 264L201 570V592" fill="none" stroke-width="8"/>
<path d="M697 155L743 440" fill="none" stroke-width="7"/>
<path d="M142 84L688 72 667 222 105 234z" fill="#f8f8f8" stroke="none"/>
<path d="M105 234L667 222 676 250 100 264z" fill="#fff" stroke="none"/>
<path d="M688 72L701 97 692 195 678 250 667 220z" fill="#858585" stroke-width="4"/>
<path d="M105 233L667 221" stroke-width="3"/>
<path d="M142 84L688 72 701 97 692 195 678 249 102 264V234z" fill="none" stroke-width="7"/>
<path d="M106 208H94L80 240V256L90 262H102M96 228L90 245H100" fill="none" stroke-width="6"/>
</g>
<g transform="translate(890 570) scale(.33333)">
<path d="M73 59L445 48 543 615 122 627z" fill="#a0adc0"/>
<path d="M73 59L445 48 543 615 122 627z" fill="url(#dots)" stroke="#0505e4" stroke-width="9"/>
<path d="M110 440L122 600" stroke="#7f9fc0" stroke-width="3" stroke-dasharray="14 6"/>
<path d="M125 592L161 627 125 662 90 627z" fill="#d8d8d8"/>
<path d="M125 600v18M125 636v18M98 627h18M134 627h18" stroke="#111" stroke-width="5"/>
<path d="M125 598l8 11h-16zM125 657l8-11h-16zM96 627l11-8v16zM154 627l-11-8v16z"/>
</g>
</svg>
<div class="keys">
<span class="keycap old">m</span>
<span class="keycap">&lt;LButtonDown&gt;</span>
<span class="keycap">&lt;LButtonUp&gt;</span>
</div>
</main>

<aside class="tray d-flex flex-column">
<div class="tray-title kr d-flex align-items-center flex-shrink-0">
<span class="tray-name me-auto">기본 트레이</span>
<button class="mini me-1" aria-label="고정"><svg viewBox="0 0 18 18"><path d="M6 11V5h5v6M4 11h9M8 11v4M10 5v6" fill="none" stroke="#000" stroke-width="1.500"/></svg></button>
<button class="closer text-white" aria-label="닫기"><svg width="10" height="10"><use href="#m-x"/></svg></button>
</div>
<div class="tray-body d-flex flex-fill">
<div class="stack d-flex flex-column">
<div class="tiny shadow-set">
<div class="shadow-head">표시:</div>
<div class="shadow-list dim">
<div class="tick-row d-flex align-items-center"><input class="tick" type="checkbox" id="c1" checked disabled><label for="c1">면에</label></div>
<div class="tick-row d-flex align-items-center"><input class="tick" type="checkbox" id="c2" checked disabled><label for="c2">바닥에</label></div>
<div class="tick-row d-flex align-items-center"><input class="tick" type="checkbox" id="c3" disabled><label for="c3">가장자리에</label></div>
</div>
</div>
<div class="sect d-flex align-items-center"><span class="tri"></span><span class="sect-name me-auto">가장자리 부드럽게</span><button class="xbtn" aria-label="닫기"><svg width="10" height="10"><use href="#m-x"/></svg></button></div>
<div class="tiny dim soften">
<label for="ang" class="soften-name d-block">법선 간 각도:</label>
<div class="mt-2 text-end pe-5"><span class="pe-5 me-1">17.3&nbsp; 도</span></div>
<input class="angle" type="range" id="ang" min="0" max="180" value="18" disabled>
<div class="ends"></div>
<div class="soften-list">
<div class="tick-row tight d-flex align-items-center"><input class="tick" type="checkbox" id="c4" checked disabled><label for="c4">법선 부드럽게</label></div>
<div class="tick-row tight d-flex align-items-center"><input class="tick" type="checkbox" id="c5" disabled><label for="c5">동일 평면 부드럽게</label></div>
</div>
</div>
<div class="sect d-flex align-items-center"><span class="tri"></span><span class="sect-name me-auto">레이어</span><button class="xbtn" aria-label="닫기"><svg width="10" height="10"><use href="#m-x"/></svg></button></div>
<div class="tray-tools d-flex align-items-center" style="height:33px;gap:10px">
<button class="mini" aria-label="레이어 추가"><svg><use href="#m-plus"/></svg></button>
<button class="mini me-auto" aria-label="레이어 삭제"><svg><use href="#m-minus"/></svg></button>
<button class="mini" aria-label="세부 정보"><svg><use href="#m-detail"/></svg></button>
</div>
<div class="lister">
<table class="layers tiny">
<colgroup><col style="width:187px"><col style="width:49px"><col style="width:40px"></colgroup>
<thead><tr><th>이름</th><th>보기</th><th>색상</th></tr></thead>
<tbody><tr><td><div class="d-flex align-items-center gap-1"><input class="dot" type="radio" id="l0" checked><label for="l0" style="font-family:'Noto Sans'">Layer0</label></div></td>
<td style="padding-left:18px"><input class="tick live" type="checkbox" checked aria-label="Layer0 보기"></td><td style="padding-left:10px"><span class="swatch"></span></td></tr></tbody>
</table>
</div>
<div class="split"></div>
<div class="sect d-flex align-items-center"><span class="tri"></span><span class="sect-name me-auto">장면</span><button class="xbtn" aria-label="닫기"><svg width="10" height="10"><use href="#m-x"/></svg></button></div>
<div class="tray-tools d-flex align-items-center border-bottom border-secondary-subtle" style="height:34px;gap:9px">
<button class="mini" aria-label="업데이트"><svg viewBox="0 0 18 18"><path d="M2 8q2-6 8-5l4 2M16 10q-2 6-8 5l-4-2" fill="none" stroke="#888" stroke-width="2"/><path d="M16 2v6h-6zM2 16v-6h6z" fill="#888"/></svg></button>
<button class="mini" aria-label="장면 추가"><svg><use href="#m-plus"/></svg></button>
<button class="mini me-auto" aria-label="장면 제거"><svg><use href="#m-minus"/></svg></button>
<button class="mini" aria-label="아래로"><svg viewBox="0 0 18 18"><path d="M14 4h-2q-2 0-2 2v6" fill="none" stroke="#777" stroke-width="2"/><path d="M7 10h6l-3 5z" fill="#777"/></svg></button>
<button class="mini" aria-label="위로"><svg viewBox="0 0 18 18"><path d="M5 14h2q2 0 2-2V6" fill="none" stroke="#777" stroke-width="2"/><path d="M6 8h6L9 3z" fill="#777"/></svg></button>
<button class="mini me-1" aria-label="보기 옵션"><svg viewBox="0 0 18 18"><path d="M1 2h5v5H1zM1 12h5v5H1z" fill="none" stroke="#222" stroke-width="1.600"/><path d="M9 2h7M9 5h5M9 8h7M9 12h7M9 15h5M9 18h6" stroke="#333" stroke-width="1.300"/><path d="M18 8h6l-3 3z"/></svg></button>
<button class="mini" aria-label="세부 표시"><svg viewBox="0 0 18 18"><path d="M3 1h10v8H3z" fill="#fff" stroke="#444"/><path d="M3 9h10v8H3z" stroke="#000"/><path d="M4 3h8L8 7z"/><path d="M5 13h6M8 10v6" stroke="#fff" stroke-width="1.500"/></svg></button>
<button class="mini" aria-label="세부 정보"><svg><use href="#m-detail"/></svg></button>
</div>
<div class="bg-white flex-fill"></div>
</div>
<div class="scroller d-flex flex-column">
<svg class="mx-auto" width="12" height="8"><path d="M1 7l5-5 5 5" fill="none" stroke="#555" stroke-width="2"/></svg>
<div class="thumb mt-auto"></div>
<svg class="mx-auto" width="12" height="8"><path d="M1 1l5 5 5-5" fill="none" stroke="#555" stroke-width="2"/></svg>
</div>
</div>
</aside>
</div>

<footer class="status kr d-flex align-items-center">
<div class="d-flex align-items-center pt-2" style="gap:17px">
<svg viewBox="0 0 18 18"><circle cx="9" cy="9" r="8" fill="none" stroke="#aaa" stroke-width="1.500"/><path d="M9 3a3 3 0 013 4L9 15 6 7a3 3 0 013-4z" fill="#999"/></svg>
<svg viewBox="0 0 18 18"><circle cx="9" cy="9" r="8" fill="none" stroke="#000" stroke-width="1.800"/><circle cx="9" cy="4.500" r="1.800"/><path d="M7 8h4v3h-1v4H8v-4H7z" stroke="#000"/></svg>
<svg viewBox="0 0 18 18"><circle cx="9" cy="9" r="8" fill="#ddd" stroke="#999" stroke-width="1.500"/><circle cx="9" cy="7" r="3" fill="#999"/><path d="M3 15q1-4 6-4t6 4q-6 4-12 0z" fill="#999"/></svg>
</div>
<span class="bar mt-2" style="margin:0 10px 0 13px"></span>
<span class="hint me-auto text-nowrap">이동할 두 점을 선택하십시오. Ctrl = 복사 토글, Alt = 자동 접기 토글, Shift를 누른 채로 선택 = 추정 잠금</span>
<span class="bar mt-2" style="margin-right:10px"></span>
<label for="vcb" class="hint" style="width:42px">거리</label>
<input class="measure" id="vcb" type="text" value="234mm">
</footer>
</div>
</body>
</html>
